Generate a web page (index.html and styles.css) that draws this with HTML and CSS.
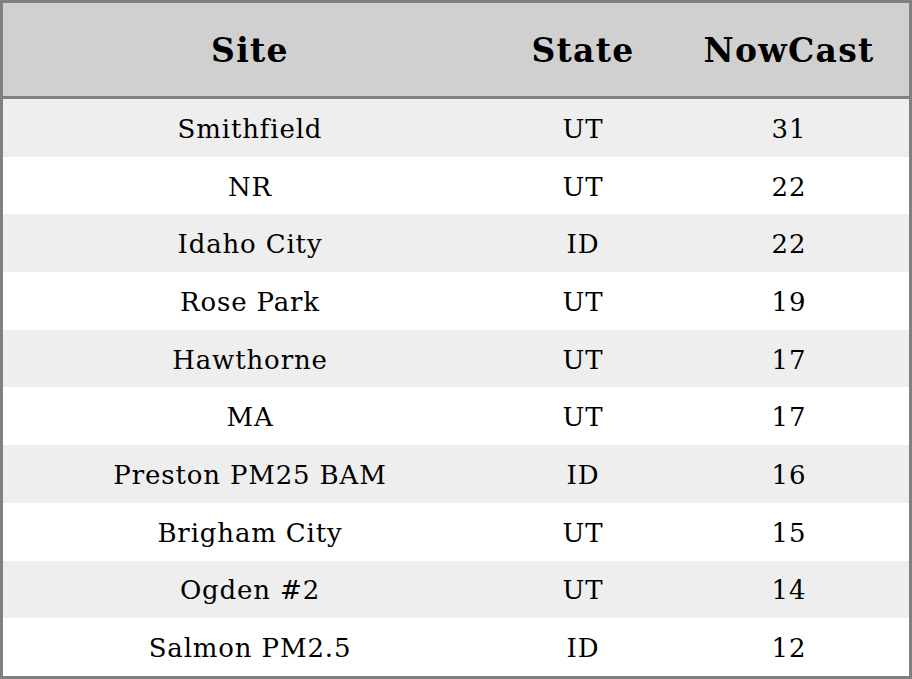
FILE: index.html
```html
<!DOCTYPE html>
<html>
<head>
<meta charset="utf-8">
<link rel="stylesheet" href="styles.css">
</head>
<body>
<table class="aq">
  <thead>
    <tr><th class="c-site">Site</th><th class="c-state">State</th><th class="c-now">NowCast</th></tr>
  </thead>
  <tbody>
    <tr><td>Smithfield</td><td>UT</td><td>31</td></tr>
    <tr><td>NR</td><td>UT</td><td>22</td></tr>
    <tr><td>Idaho City</td><td>ID</td><td>22</td></tr>
    <tr><td>Rose Park</td><td>UT</td><td>19</td></tr>
    <tr><td>Hawthorne</td><td>UT</td><td>17</td></tr>
    <tr><td>MA</td><td>UT</td><td>17</td></tr>
    <tr><td>Preston PM25 BAM</td><td>ID</td><td>16</td></tr>
    <tr><td>Brigham City</td><td>UT</td><td>15</td></tr>
    <tr><td>Ogden #2</td><td>UT</td><td>14</td></tr>
    <tr><td>Salmon PM2.5</td><td>ID</td><td>12</td></tr>
  </tbody>
</table>
</body>
</html>
```
FILE: styles.css
```css
html, body { margin: 0; padding: 0; background: #ffffff; }
.aq {
  width: 912px;
  height: 679px;
  border-collapse: collapse;
  border: 3px solid #808080;
  font-family: "DejaVu Serif", serif;
  color: #000;
  table-layout: fixed;
}
.aq th {
  background: #d0d0d0;
  font-size: 33px;
  letter-spacing: 1.3px;
  font-weight: bold;
  height: 91px;
  padding: 2px 0 0;
  border-bottom: 3px solid #808080;
  text-align: center;
}
.c-site { width: 494px; }
.c-state { width: 172px; }
.aq td {
  font-size: 26px;
  letter-spacing: 0.85px;
  text-align: center;
  padding: 2px 0 0;
  height: 55.5px;
}
.aq tbody tr:nth-child(odd) td { background: #eeeeee; }
```
